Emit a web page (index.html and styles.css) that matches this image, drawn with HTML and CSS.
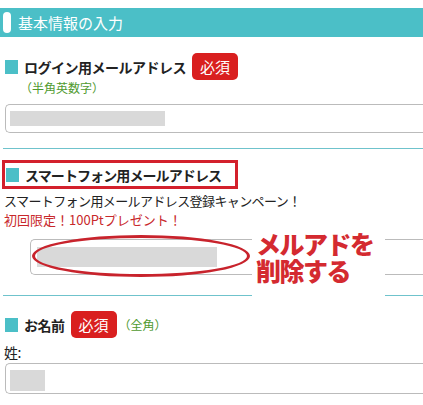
FILE: index.html
```html
<!DOCTYPE html>
<html lang="ja">
  <head>
    <meta charset="utf-8" />
    <title>基本情報の入力</title>
    <link rel="stylesheet" href="styles.css">
  </head>
  <body>
    <div class="title-bar">
      <span class="title-pill"></span>
      <span class="title-text">基本情報の入力</span>
    </div>

    <div class="field login">
      <div class="field-head">
        <span class="mark"></span>
        <span class="label">ログイン用メールアドレス</span>
        <span class="badge">必須</span>
      </div>
      <div class="note">（半角英数字）</div>
      <div class="input">
        <span class="fill fill-long"></span>
      </div>
    </div>
    <hr class="rule" />

    <div class="field mobile">
      <div class="field-head boxed">
        <span class="mark"></span>
        <span class="label">スマートフォン用メールアドレス</span>
      </div>
      <div class="text">スマートフォン用メールアドレス登録キャンペーン！</div>
      <div class="text red">初回限定！100Ptプレゼント！</div>
      <div class="input-wrap">
        <div class="input input-mail">
          <span class="fill fill-mail"></span>
        </div>
        <span class="ring"></span>
        <div class="callout">メルアドを<br />削除する</div>
      </div>
    </div>
    <hr class="rule rule-low" />

    <div class="field name">
      <div class="field-head">
        <span class="mark"></span>
        <span class="label">お名前</span>
        <span class="badge">必須</span>
        <span class="note inline">（全角）</span>
      </div>
      <div class="text sei">姓:</div>
      <div class="input input-sei">
        <span class="fill fill-short"></span>
      </div>
    </div>
  </body>
</html>
```

FILE: styles.css
```css
body {
  margin: 0;
  background-color: #fff;
  color: #222;
  font-family: "Noto Sans CJK JP", "Noto Sans", sans-serif;
  font-size: 14px;
  overflow: hidden;
}

.title-bar {
  margin-top: 8px;
  height: 29px;
  background-color: #4bbfc7;
  display: flex;
  align-items: center;
}

.title-pill {
  width: 8px;
  height: 21px;
  margin-left: 3px;
  background-color: #fff;
  border-radius: 4px;
}

.title-text {
  margin-left: 7px;
  color: #fff;
  font-size: 15px;
  line-height: 1;
}

.field {
  padding-left: 5px;
}

.field-head {
  margin-top: 16px;
  height: 27px;
  display: flex;
  align-items: center;
}

.mark {
  width: 13px;
  height: 14px;
  background-color: #4bbfc7;
  margin-right: 6px;
  flex: none;
}

.label {
  font-size: 14px;
  letter-spacing: -0.5px;
  font-weight: bold;
  color: #222;
  white-space: nowrap;
}

.badge {
  margin-left: 6px;
  width: 46px;
  height: 27px;
  line-height: 27px;
  text-align: center;
  background-color: #d91f1f;
  color: #fff;
  border-radius: 5px;
  font-size: 15px;
  flex: none;
}

.note {
  color: #4f9a2f;
  font-size: 12px;
  line-height: 14px;
  margin-top: 1px;
  padding-left: 15px;
}

.note.inline {
  padding-left: 2px;
  margin-top: 0;
}

.input {
  margin-top: 9px;
  height: 27px;
  border: 1px solid #bbb;
  border-right: none;
  border-radius: 5px 0 0 5px;
  display: flex;
  align-items: center;
  padding-left: 4px;
}

.fill {
  background-color: #d9d9d9;
  height: 15px;
}

.fill-long {
  width: 155px;
}

.rule {
  margin: 15px 0 0 3px;
  border: none;
  border-top: 1px solid #6fc3cc;
  height: 0;
}

.rule-low {
  margin-top: 20px;
}

.boxed {
  margin-top: 11px;
  margin-left: -3px;
  width: 229px;
  height: 23px;
  border: 3px solid #d3202c;
  padding-left: 1px;
}

.boxed .label {
  letter-spacing: -0.9px;
}

.text {
  font-size: 13px;
  letter-spacing: -0.6px;
  line-height: 19px;
  margin-left: -1px;
  color: #222;
}

.mobile .boxed + .text {
  margin-top: 2px;
}

.text.red {
  color: #c8282b;
  letter-spacing: 0;
}

.input-wrap {
  position: relative;
  margin-top: 10px;
  margin-left: 25px;
}

.input-mail {
  margin-top: 0;
  height: 34px;
  padding-left: 6px;
}

.fill-mail {
  width: 180px;
  height: 20px;
}

.ring {
  position: absolute;
  left: 2px;
  top: -4px;
  width: 212px;
  height: 36px;
  border: 3px solid #c8232c;
  border-radius: 50%;
}

.callout {
  position: absolute;
  left: 222px;
  top: -15px;
  width: 129px;
  height: 67px;
  padding: 6px 0 0 4px;
  background-color: #fff;
  color: #d42a30;
  font-size: 25px;
  letter-spacing: -1.5px;
  font-weight: 900;
  line-height: 27px;
}

.name .field-head {
  margin-top: 15px;
}

.sei {
  margin-top: 5px;
  font-size: 14px;
}

.input-sei {
  margin-top: 1px;
  height: 29px;
  align-items: flex-end;
}

.fill-short {
  width: 35px;
  height: 21px;
  margin-bottom: 2px;
}
```
